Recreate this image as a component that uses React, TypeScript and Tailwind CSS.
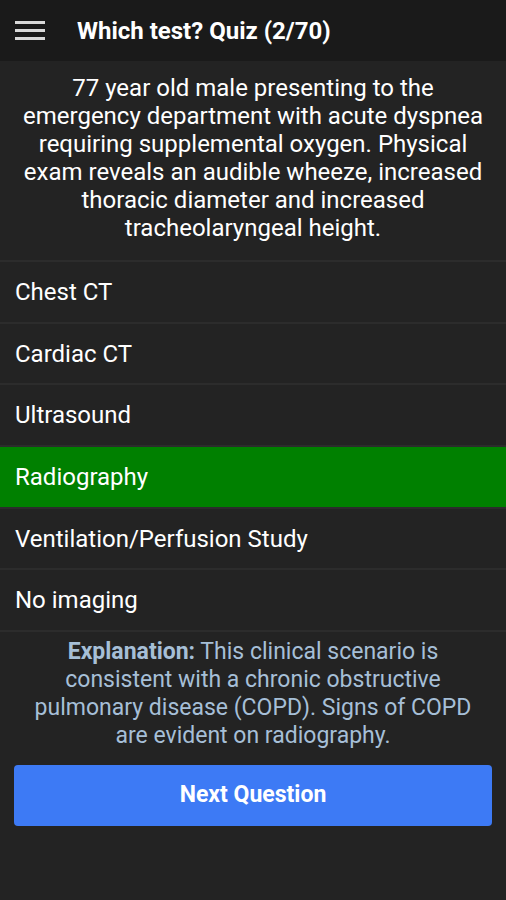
const options = [
  "Chest CT",
  "Cardiac CT",
  "Ultrasound",
  "Radiography",
  "Ventilation/Perfusion Study",
  "No imaging",
];

const App = () => {
  return (
    <div className="flex min-h-[900px] w-full flex-col bg-[#232323] font-['Roboto',sans-serif] text-white">
      <div className="flex h-[61px] items-center bg-[#1a1a1a]">
        <div className="ml-[15px] flex w-[30px] flex-col gap-[5px]">
          <span className="h-[3px] w-full bg-[#d9d9d9]" />
          <span className="h-[3px] w-full bg-[#d9d9d9]" />
          <span className="h-[3px] w-full bg-[#d9d9d9]" />
        </div>
        <h1 className="ml-[32px] text-[24px] font-bold">Which test? Quiz (2/70)</h1>
      </div>
      <p className="px-[22px] pt-[13px] pb-[18px] text-center text-[24px] leading-[28px]">
        77 year old male presenting to the emergency department with acute dyspnea
        requiring supplemental oxygen. Physical exam reveals an audible wheeze,
        increased thoracic diameter and increased tracheolaryngeal height.
      </p>
      <div className="flex flex-col">
        {options.map((o) => (
          <div
            key={o}
            className={
              o === "Radiography"
                ? "flex h-[61.7px] items-center border-t-2 border-[#2c2c2c] bg-[#008000] px-[15px] text-[24px]"
                : "flex h-[61.7px] items-center border-t-2 border-[#2c2c2c] px-[15px] text-[24px]"
            }
          >
            {o}
          </div>
        ))}
        <div className="border-t-2 border-[#2c2c2c]" />
      </div>
      <p className="px-[20px] pt-[6px] text-center text-[23px] leading-[28px] text-[#a6bfd7]">
        <span className="font-bold">Explanation:</span> This clinical scenario is
        consistent with a chronic obstructive pulmonary disease (COPD). Signs of
        COPD are evident on radiography.
      </p>
      <button className="mx-[14px] mt-[15px] h-[61px] rounded-[4px] bg-[#3d7af5] text-[23px] font-bold">
        Next Question
      </button>
    </div>
  );
};

export default App;
